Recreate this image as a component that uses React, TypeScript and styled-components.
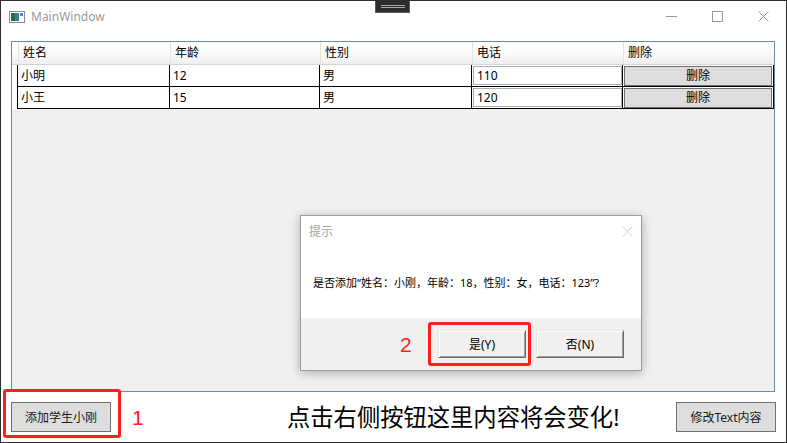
import React from "react";
import styled, { createGlobalStyle } from "styled-components";

const GlobalStyle = createGlobalStyle`
  html, body {
    margin: 0;
    padding: 0;
    background: #ffffff;
  }
  body {
    font-family: "Noto Sans", "Noto Sans CJK SC", sans-serif;
    color: #000000;
  }
`;

const COLUMNS = [
  { title: "姓名", width: 152 },
  { title: "年龄", width: 150 },
  { title: "性别", width: 152 },
  { title: "电话", width: 151 },
  { title: "删除", width: 151 },
];

const STUDENTS = [
  { name: "小明", age: 12, gender: "男", phone: "110" },
  { name: "小王", age: 15, gender: "男", phone: "120" },
];

const Window = styled.div`
  position: relative;
  width: 787px;
  height: 443px;
  box-sizing: border-box;
  border: 1px solid #2f2f2f;
  background: #ffffff;
  display: flex;
  flex-direction: column;
  overflow: hidden;
`;

const SnapHandle = styled.div`
  position: absolute;
  top: -1px;
  left: 374px;
  width: 35px;
  height: 13px;
  box-sizing: border-box;
  border: 1px solid #5a5a5a;
  background: #2d2d2d;
  display: flex;
  flex-direction: column;
  align-items: center;
  justify-content: center;
  gap: 1px;
`;

const SnapLine = styled.div`
  width: 24px;
  height: 1px;
  background: #a8a8a8;
`;

const TitleBar = styled.div`
  height: 31px;
  flex-shrink: 0;
  display: flex;
  align-items: center;
`;

const AppIcon = styled.svg`
  margin-left: 8px;
  width: 16px;
  height: 12px;
`;

const WindowTitle = styled.span`
  margin-left: 6px;
  font-size: 12px;
  color: #9a9a9a;
`;

const CaptionButtons = styled.div`
  margin-left: auto;
  display: flex;
  height: 31px;
`;

const CaptionButton = styled.div`
  width: 46px;
  height: 31px;
  display: flex;
  align-items: center;
  justify-content: center;
`;

const Client = styled.div`
  flex: 1;
  display: flex;
  flex-direction: column;
`;

const Grid = styled.div`
  margin: 9px 0 0 10px;
  width: 764px;
  height: 351px;
  box-sizing: border-box;
  border: 1px solid #688caf;
  background: #f0f0f0;
  display: flex;
  flex-direction: column;
  font-size: 12px;
`;

const HeaderRow = styled.div`
  display: flex;
  height: 23px;
  box-sizing: border-box;
  border-bottom: 1px solid #d5d5d5;
  background: linear-gradient(#ffffff 0%, #fbfbfb 50%, #eeeeee 100%);
`;

const HeaderCorner = styled.div`
  width: 6px;
`;

const HeaderCell = styled.div<{ $w: number }>`
  width: ${(p) => p.$w}px;
  box-sizing: border-box;
  border-left: 1px solid #e2e2e2;
  padding-left: 4px;
  line-height: 22px;
  &:first-of-type {
    border-left: none;
  }
`;

const DataRow = styled.div`
  display: flex;
  height: 22px;
  background: #ffffff;
`;

const RowGutter = styled.div`
  width: 5px;
  background: #ffffff;
`;

const RowCells = styled.div`
  display: flex;
  border-left: 1px solid #000000;
  border-bottom: 1px solid #000000;
`;

const Cell = styled.div<{ $w: number }>`
  width: ${(p) => p.$w}px;
  height: 21px;
  box-sizing: border-box;
  border-right: 1px solid #000000;
  display: flex;
`;

const CellText = styled.span`
  padding-left: 3px;
  line-height: 21px;
`;

const PhoneBox = styled.div`
  margin: 1px 0 1px 1px;
  width: 149px;
  height: 19px;
  box-sizing: border-box;
  border: 1px solid #abadb3;
  background: #ffffff;
  padding-left: 3px;
  line-height: 17px;
`;

const DeleteButton = styled.div`
  margin: 1px 1px 0 1px;
  width: 148px;
  height: 20px;
  box-sizing: border-box;
  border: 1px solid #707070;
  background: #dddddd;
  text-align: center;
  line-height: 18px;
`;

const BottomBar = styled.div`
  height: 50px;
  display: flex;
  align-items: center;
  padding: 0 10px;
`;

const FlatButton = styled.div`
  width: 100px;
  height: 30px;
  box-sizing: border-box;
  border: 1px solid #707070;
  background: #dddddd;
  font-size: 12px;
  color: #1a1a1a;
  display: flex;
  align-items: center;
  justify-content: center;
`;

const BigText = styled.span`
  margin-left: 176px;
  font-size: 23.3px;
  line-height: 30px;
  color: #000000;
`;

const RightButton = styled(FlatButton)`
  margin-left: auto;
`;

const Dialog = styled.div`
  position: absolute;
  left: 299px;
  top: 214px;
  width: 342px;
  height: 156px;
  box-sizing: border-box;
  border: 1px solid #9c9c9c;
  background: #ffffff;
  box-shadow: 0 2px 10px rgba(0, 0, 0, 0.28);
  display: flex;
  flex-direction: column;
`;

const DialogTitle = styled.div`
  height: 30px;
  display: flex;
  align-items: center;
  padding: 0 8px;
  font-size: 12px;
  color: #a4a4a4;
`;

const DialogClose = styled.svg`
  margin-left: auto;
  width: 11px;
  height: 11px;
`;

const DialogBody = styled.div`
  height: 72px;
  display: flex;
  align-items: center;
  padding-left: 12px;
  font-size: 11px;
  color: #000000;
`;

const DialogFooter = styled.div`
  flex: 1;
  background: #f0f0f0;
  display: flex;
  justify-content: flex-end;
  align-items: flex-start;
  gap: 10px;
  padding: 12px 17px 0 0;
`;

const ClassicButton = styled.div`
  width: 88px;
  height: 28px;
  box-sizing: border-box;
  border: 1px solid;
  border-color: #e6e6e6 #6a6a6a #6a6a6a #e6e6e6;
  box-shadow: inset 1px 1px #ffffff, inset -1px -1px #a0a0a0;
  background: #f0f0f0;
  font-size: 12px;
  display: flex;
  align-items: center;
  justify-content: center;
`;

const RedFrame = styled.div<{ $x: number; $y: number; $w: number; $h: number }>`
  position: absolute;
  left: ${(p) => p.$x}px;
  top: ${(p) => p.$y}px;
  width: ${(p) => p.$w}px;
  height: ${(p) => p.$h}px;
  box-sizing: border-box;
  border: 3px solid #ff1e1e;
  border-radius: 3px;
`;

const RedNumber = styled.span<{ $x: number; $y: number }>`
  position: absolute;
  left: ${(p) => p.$x}px;
  top: ${(p) => p.$y}px;
  font-family: "Liberation Sans", sans-serif;
  font-size: 21px;
  line-height: 21px;
  color: #ff1e1e;
`;

function WindowIcon() {
  return (
    <AppIcon viewBox="0 0 16 12">
      <rect x="0.5" y="0.5" width="15" height="11" fill="#ffffff" stroke="#8a8a8a" />
      <rect x="2" y="2" width="8" height="8" fill="#3f7f86" />
      <rect x="2" y="2" width="4" height="8" fill="#2c6a55" />
      <rect x="11" y="2" width="3" height="3" fill="#4a86c8" />
    </AppIcon>
  );
}

function Caption() {
  return (
    <CaptionButtons>
      <CaptionButton>
        <svg width="11" height="1" viewBox="0 0 11 1">
          <rect width="11" height="1" fill="#9a9a9a" />
        </svg>
      </CaptionButton>
      <CaptionButton>
        <svg width="11" height="11" viewBox="0 0 11 11">
          <rect x="0.5" y="0.5" width="10" height="10" fill="none" stroke="#9a9a9a" />
        </svg>
      </CaptionButton>
      <CaptionButton>
        <svg width="11" height="11" viewBox="0 0 11 11">
          <path d="M0.5 0.5 L10.5 10.5 M10.5 0.5 L0.5 10.5" stroke="#9a9a9a" strokeWidth="1" />
        </svg>
      </CaptionButton>
    </CaptionButtons>
  );
}

function StudentGrid() {
  return (
    <Grid>
      <HeaderRow>
        <HeaderCorner />
        {COLUMNS.map((col) => (
          <HeaderCell key={col.title} $w={col.width}>
            {col.title}
          </HeaderCell>
        ))}
      </HeaderRow>
      {STUDENTS.map((s) => (
        <DataRow key={s.name}>
          <RowGutter />
          <RowCells>
            <Cell $w={COLUMNS[0].width}>
              <CellText>{s.name}</CellText>
            </Cell>
            <Cell $w={COLUMNS[1].width}>
              <CellText>{s.age}</CellText>
            </Cell>
            <Cell $w={COLUMNS[2].width}>
              <CellText>{s.gender}</CellText>
            </Cell>
            <Cell $w={COLUMNS[3].width}>
              <PhoneBox>{s.phone}</PhoneBox>
            </Cell>
            <Cell $w={COLUMNS[4].width}>
              <DeleteButton>删除</DeleteButton>
            </Cell>
          </RowCells>
        </DataRow>
      ))}
    </Grid>
  );
}

function ConfirmDialog() {
  return (
    <Dialog>
      <DialogTitle>
        提示
        <DialogClose viewBox="0 0 11 11">
          <path d="M0.5 0.5 L10.5 10.5 M10.5 0.5 L0.5 10.5" stroke="#d2d2d2" strokeWidth="1" />
        </DialogClose>
      </DialogTitle>
      <DialogBody>是否添加“姓名：小刚，年龄：18，性别：女，电话：123”?</DialogBody>
      <DialogFooter>
        <ClassicButton>是(Y)</ClassicButton>
        <ClassicButton>否(N)</ClassicButton>
      </DialogFooter>
    </Dialog>
  );
}

export default function App() {
  return (
    <>
      <GlobalStyle />
      <Window>
        <TitleBar>
          <WindowIcon />
          <WindowTitle>MainWindow</WindowTitle>
          <Caption />
        </TitleBar>
        <Client>
          <StudentGrid />
          <BottomBar>
            <FlatButton>添加学生小刚</FlatButton>
            <BigText>点击右侧按钮这里内容将会变化!</BigText>
            <RightButton>修改Text内容</RightButton>
          </BottomBar>
        </Client>
        <SnapHandle>
          <SnapLine />
          <SnapLine />
        </SnapHandle>
        <ConfirmDialog />
        <RedFrame $x={2} $y={388} $w={118} $h={49} />
        <RedNumber $x={131} $y={406}>1</RedNumber>
        <RedFrame $x={427} $y={321} $w={103} $h={44} />
        <RedNumber $x={399} $y={333}>2</RedNumber>
      </Window>
    </>
  );
}
